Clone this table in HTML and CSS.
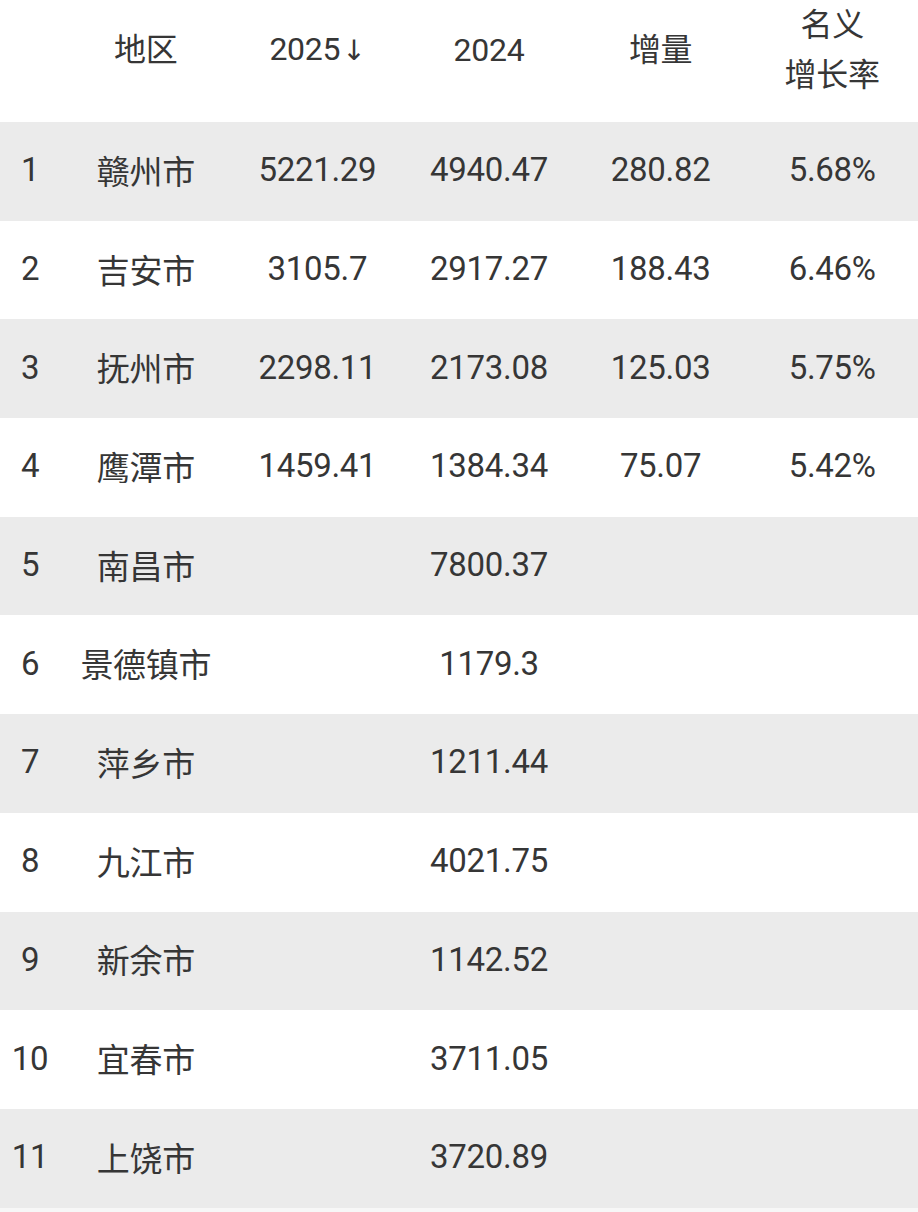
FILE: index.html
```html
<!DOCTYPE html>
<html lang="zh-CN">
<head>
<meta charset="utf-8">
<title>江西各市GDP</title>
<link rel="stylesheet" href="styles.css">
</head>
<body>
<div class="table">
  <div class="row head">
    <div class="cell"></div>
    <div class="cell">地区</div>
    <div class="cell">2025<span class="arrow">↓</span></div>
    <div class="cell">2024</div>
    <div class="cell">增量</div>
    <div class="cell">名义<br>增长率</div>
  </div>
  <div class="row odd"><div class="cell rank">1</div><div class="cell">赣州市</div><div class="cell">5221.29</div><div class="cell">4940.47</div><div class="cell">280.82</div><div class="cell">5.68%</div></div>
  <div class="row"><div class="cell rank">2</div><div class="cell">吉安市</div><div class="cell">3105.7</div><div class="cell">2917.27</div><div class="cell">188.43</div><div class="cell">6.46%</div></div>
  <div class="row odd"><div class="cell rank">3</div><div class="cell">抚州市</div><div class="cell">2298.11</div><div class="cell">2173.08</div><div class="cell">125.03</div><div class="cell">5.75%</div></div>
  <div class="row"><div class="cell rank">4</div><div class="cell">鹰潭市</div><div class="cell">1459.41</div><div class="cell">1384.34</div><div class="cell">75.07</div><div class="cell">5.42%</div></div>
  <div class="row odd"><div class="cell rank">5</div><div class="cell">南昌市</div><div class="cell"></div><div class="cell">7800.37</div><div class="cell"></div><div class="cell"></div></div>
  <div class="row"><div class="cell rank">6</div><div class="cell">景德镇市</div><div class="cell"></div><div class="cell">1179.3</div><div class="cell"></div><div class="cell"></div></div>
  <div class="row odd"><div class="cell rank">7</div><div class="cell">萍乡市</div><div class="cell"></div><div class="cell">1211.44</div><div class="cell"></div><div class="cell"></div></div>
  <div class="row"><div class="cell rank">8</div><div class="cell">九江市</div><div class="cell"></div><div class="cell">4021.75</div><div class="cell"></div><div class="cell"></div></div>
  <div class="row odd"><div class="cell rank">9</div><div class="cell">新余市</div><div class="cell"></div><div class="cell">1142.52</div><div class="cell"></div><div class="cell"></div></div>
  <div class="row"><div class="cell rank">10</div><div class="cell">宜春市</div><div class="cell"></div><div class="cell">3711.05</div><div class="cell"></div><div class="cell"></div></div>
  <div class="row odd"><div class="cell rank">11</div><div class="cell">上饶市</div><div class="cell"></div><div class="cell">3720.89</div><div class="cell"></div><div class="cell"></div></div>
  <div class="tail"></div>
</div>
</body>
</html>
```
FILE: styles.css
```css
html, body {
  margin: 0;
  padding: 0;
  background: #ffffff;
}
body {
  width: 918px;
  height: 1212px;
  overflow: hidden;
  font-family: Roboto, "Noto Sans CJK SC", sans-serif;
  color: #363636;
}
.table {
  display: flex;
  flex-direction: column;
}
.row {
  display: grid;
  grid-template-columns: 60px repeat(5, 171.6px);
  height: 98.7px;
  box-sizing: border-box;
  padding-bottom: 3px;
  align-items: center;
  font-size: 33px;
  letter-spacing: -0.3px;
}
.row.head {
  height: 122px;
  padding-bottom: 26px;
  line-height: 50px;
  font-size: 32px;
}
.row.odd {
  background: #ebebeb;
}
.tail {
  height: 5px;
  background: #f7f7f7;
}
.cell {
  text-align: center;
  white-space: nowrap;
}
.arrow {
  font-family: "DejaVu Sans", sans-serif;
  font-size: 28px;
  margin-left: 2px;
}
```
